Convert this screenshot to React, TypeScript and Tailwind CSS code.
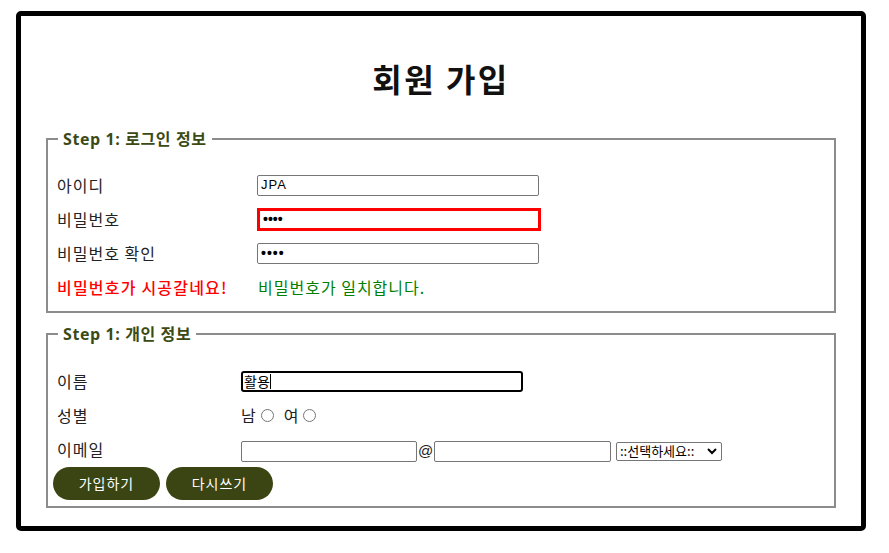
import React from "react";

const KR = { fontFamily: '"Noto Sans CJK KR", "Noto Sans", sans-serif' };
const AR = { fontFamily: '"Liberation Sans", Arial, sans-serif' };

function TextBox({ value, w, pw }: { value?: string; w: string; pw?: boolean }) {
  return (
    <div
      className={`${w} h-[21px] border border-[#767676] rounded-[2px] bg-white flex items-center px-[3px] text-[13px] text-black`}
      style={AR}
    >
      {pw ? <span className="font-bold text-[14px]">••••</span> : value}
    </div>
  );
}

function Radio() {
  return <span className="inline-block w-[13px] h-[13px] rounded-full border border-[#767676] bg-white mx-[4px]" />;
}

const legendStyle = { fontFamily: '"Open Sans", "Noto Sans CJK KR", sans-serif' };

export default function App() {
  return (
    <div className="w-[889px] h-[553px] bg-white relative" style={KR}>
      <div className="absolute left-[16px] top-[11px] w-[850px] h-[520px] border-[5px] border-black rounded-[5px] px-[25px]">
        <h1 className="text-[32px] font-bold text-center leading-[40px] pt-[42px] text-[#111] tracking-[2.5px]" style={KR}>
          회원 가입
        </h1>
        <fieldset className="mt-[31px] border-2 border-[#8c8c8c] pl-[9px] pr-[9px] pb-[7px] pt-[19px]">
          <legend className="ml-[1px] px-[5px] text-[16px] font-bold text-[#3b4a14] leading-[20px] tracking-[0.6px]" style={legendStyle}>
            Step 1: 로그인 정보
          </legend>
          <div className="grid grid-cols-[200px_1fr] auto-rows-[34px] items-center text-[16px] tracking-[1px] text-[#222]">
            <div>아이디</div>
            <TextBox value="JPA" w="w-[282px]" />
            <div>비밀번호</div>
            <div className="w-[284px] h-[23px] border-[3px] border-[#ff0000] flex items-center px-[3px] text-black" style={AR}>
              <span className="font-bold text-[14px] tracking-normal">••••</span>
            </div>
            <div>비밀번호 확인</div>
            <TextBox pw w="w-[282px]" />
            <div className="text-[#ff0000] font-medium tracking-[1.2px]">비밀번호가 시공갈네요!</div>
            <div className="text-[#008000] pl-[1px]">비밀번호가 일치합니다.</div>
          </div>
        </fieldset>
        <fieldset className="mt-[11px] border-2 border-[#8c8c8c] pl-[9px] pr-[9px] pb-[6px] pt-[20px]">
          <legend className="ml-[1px] px-[5px] text-[16px] font-bold text-[#3b4a14] leading-[20px] tracking-[0.6px]" style={legendStyle}>
            Step 1: 개인 정보
          </legend>
          <div className="grid grid-cols-[184px_1fr] auto-rows-[34px] items-center text-[16px] tracking-[1px] text-[#222]">
            <div>이름</div>
            <div className="w-[282px] h-[21px] border-2 border-black rounded-[3px] flex items-center px-[1px] text-[14px] text-black leading-none tracking-normal">
              활용<span className="inline-block w-px h-[15px] bg-black" />
            </div>
            <div>성별</div>
            <div className="flex items-center">
              <span>남</span>
              <Radio />
              <span className="ml-[6px]">여</span>
              <Radio />
            </div>
            <div>이메일</div>
            <div className="flex items-center pt-[4px] tracking-normal">
              <TextBox w="w-[176px]" />
              <span className="w-[17px] text-center text-[15px]" style={AR}>@</span>
              <TextBox w="w-[177px]" />
              <div className="ml-[5px] w-[106px] h-[19px] border border-[#767676] rounded-[2px] flex items-center justify-between pl-[3px] pr-[4px] text-[13px] text-black">
                <span>::선택하세요::</span>
                <svg width="10" height="8" viewBox="0 0 10 8">
                  <path d="M1 2 L5 6 L9 2" stroke="black" strokeWidth="2" fill="none" />
                </svg>
              </div>
            </div>
          </div>
          <div className="flex gap-[6px] -ml-[4px] mt-[1px]">
            <button className="w-[107px] h-[33px] rounded-full bg-[#3a4513] text-white text-[14px] tracking-[1px]">가입하기</button>
            <button className="w-[107px] h-[33px] rounded-full bg-[#3a4513] text-white text-[14px] tracking-[1px]">다시쓰기</button>
          </div>
        </fieldset>
      </div>
    </div>
  );
}
